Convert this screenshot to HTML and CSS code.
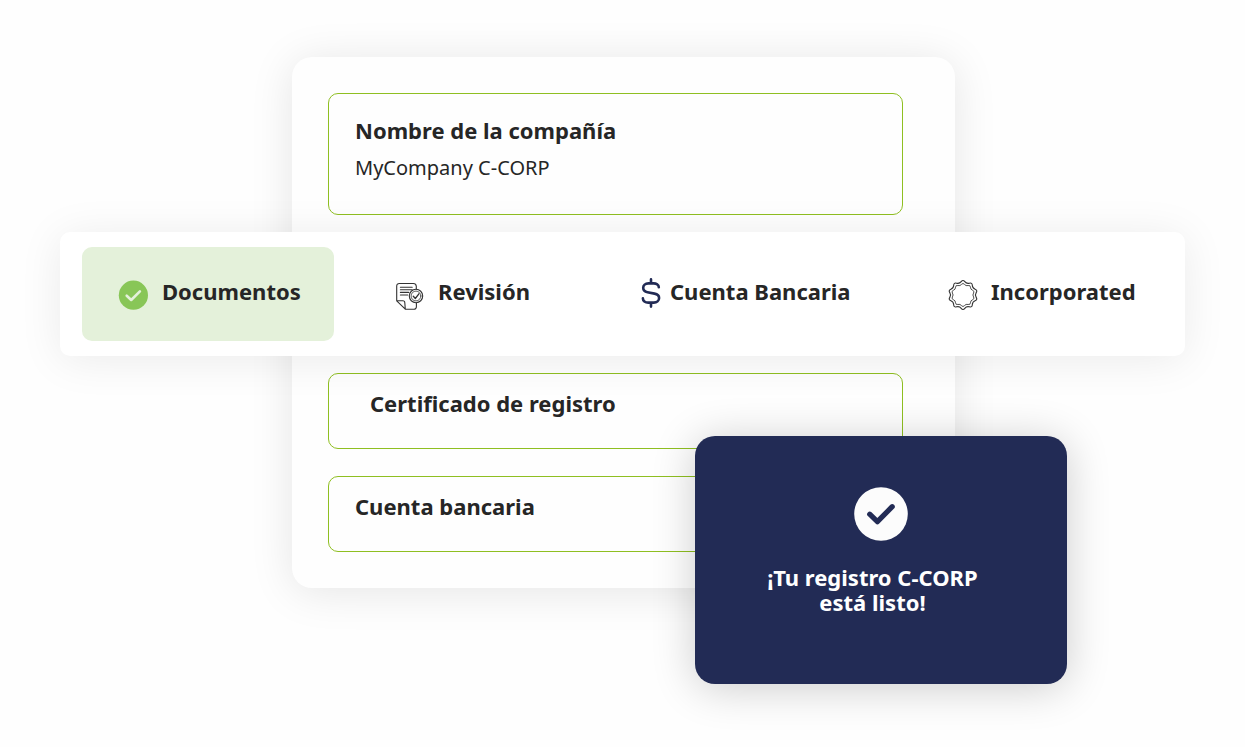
FILE: index.html
```html
<!DOCTYPE html>
<html lang="es">
<head>
<meta charset="utf-8">
<meta name="viewport" content="width=device-width, initial-scale=1">
<title>Registro C-CORP</title>
<link rel="stylesheet" href="styles.css">
</head>
<body>
<main class="stage">
  <section class="card">
    <article class="field field-company">
      <h2 class="title">Nombre de la compañía</h2>
      <p class="value">MyCompany C-CORP</p>
    </article>
    <article class="field field-certificate">
      <h2 class="title">Certificado de registro</h2>
    </article>
    <article class="field">
      <h2 class="title">Cuenta bancaria</h2>
    </article>
  </section>

  <nav class="steps" aria-label="Pasos">
    <button class="step step-active" type="button" aria-current="step">
      <svg class="icon" width="30" height="30" viewBox="0 0 30 30" aria-hidden="true">
        <circle cx="15.4" cy="15.2" r="14.6" fill="#88c657"/>
        <path d="M8.7 15.7l4.5 4.3 8.7-8.7" fill="none" stroke="#e4f1da" stroke-width="2.6" stroke-linecap="round" stroke-linejoin="round"/>
      </svg>
      <span class="label">Documentos</span>
    </button>
    <button class="step" type="button">
      <svg class="icon" width="28" height="30" viewBox="0 -2 28 30" fill="none" stroke="#333" stroke-width="1.1" stroke-linecap="round" stroke-linejoin="round" aria-hidden="true">
        <path d="M20.3 7V4.2A3 3 0 0 0 17.3 1.5H3.2A2.5 2.5 0 0 0 .7 4v14.8l8.6 8.4H18a2.4 2.4 0 0 0 2.4-2.4v-3.8M.7 18.8h6.1a2 2 0 0 1 2 2l.5 6.4"/>
        <path d="M4.4 5.2h11.8M4.4 7.8h11.8M4.4 10.4h8.4M4.4 13h7.4"/>
        <circle cx="20" cy="14" r="6.7"/>
        <circle cx="20" cy="14" r="4.9" stroke-width=".8"/>
        <path d="M17.3 14.2l2 2.3 3.6-4.7" stroke-width="1.3"/>
      </svg>
      <span class="label">Revisión</span>
    </button>
    <button class="step step-bank" type="button">
      <svg class="icon icon-dollar" width="20" height="30" viewBox="0 0 20 30" fill="none" stroke="#222b55" stroke-width="2.6" stroke-linecap="round" stroke-linejoin="round" aria-hidden="true">
        <path d="M10 1.4v4M10 24.6v4M17.8 9.3C17.8 6.7 15.2 5.4 12.6 5.4H7.4C4.2 5.4 2.2 7.3 2.2 9.8c0 2.6 1.8 4 4.3 4.5l7 1.3c2.8.5 4.6 1.9 4.6 4.4 0 2.8-2.2 4.6-5.4 4.6H7.3c-3.2 0-5.4-1.7-5.4-4.2"/>
      </svg>
      <span class="label">Cuenta Bancaria</span>
    </button>
    <button class="step step-last" type="button">
      <svg class="icon" width="30" height="30" viewBox="-15 -15 30 30" fill="none" stroke="#333" stroke-width="1.1" stroke-linejoin="round" aria-hidden="true">
        <path id="seal" d="M-1.8-13.3Q0-15.6 1.8-13.3Q3.6-11 6.4-11.8Q9.2-12.6 9.3-9.7Q9.4-6.8 12.1-5.8Q14.8-4.8 13.2-2.4Q11.6 0 13.2 2.4Q14.8 4.8 12.1 5.8Q9.4 6.8 9.3 9.7Q9.2 12.6 6.4 11.8Q3.6 11 1.8 13.3Q0 15.6-1.8 13.3Q-3.6 11-6.4 11.8Q-9.2 12.6-9.3 9.7Q-9.4 6.8-12.1 5.8Q-14.8 4.8-13.2 2.4Q-11.6 0-13.2-2.4Q-14.8-4.8-12.1-5.8Q-9.4-6.8-9.3-9.7Q-9.2-12.6-6.4-11.8Q-3.6-11-1.8-13.3Z"/>
        <use href="#seal" transform="scale(.8)"/>
      </svg>
      <span class="label">Incorporated</span>
    </button>
  </nav>

  <aside class="notice" role="status">
    <svg width="54" height="54" viewBox="0 0 54 54" aria-hidden="true">
      <circle cx="27" cy="27" r="26.8" fill="#fcfcfc"/>
      <path d="M15.7 27.2l7.7 7.5 14.8-15" fill="none" stroke="#222b55" stroke-width="5.2" stroke-linecap="round" stroke-linejoin="round"/>
    </svg>
    <p class="notice-text">¡Tu registro C-CORP<br>está listo!</p>
  </aside>
</main>
</body>
</html>
```
FILE: styles.css
```css
* {
  box-sizing: border-box;
}

body {
  margin: 0;
  background: #fefefe;
  color: #262626;
  font-family: "Noto Sans", "Open Sans", sans-serif;
}

.stage {
  position: relative;
  padding: 57px 60px 159px 62px;
}

.card {
  width: 100%;
  max-width: 663px;
  margin: 0 auto;
  padding: 36px 52px 36px 36px;
  border-radius: 20px;
  background: #fefefe;
  box-shadow: 0 4px 44px rgba(0, 0, 0, 0.1);
}

.field {
  min-height: 76px;
  margin-bottom: 27px;
  padding: 13px 26px;
  border: 1px solid #8fbf21;
  border-radius: 10px;
}

.field:last-child {
  margin-bottom: 0;
}

.field-company {
  min-height: 122px;
  margin-bottom: 158px;
  padding-top: 20px;
}

.field-certificate {
  padding-left: 41px;
}

.title,
.value {
  margin: 0;
  line-height: 32px;
}

.title {
  font-size: 22px;
  font-weight: 700;
}

.value {
  margin-top: 6px;
  font-size: 20px;
}

.steps {
  position: absolute;
  top: 232px;
  left: 60px;
  right: 60px;
  display: grid;
  grid-template-columns: 252fr 219fr 281fr 251fr;
  gap: 26px;
  padding: 15px 22px;
  border-radius: 10px;
  background: #fff;
  box-shadow: 0 4px 44px rgba(0, 0, 0, 0.08);
}

.step {
  display: flex;
  align-items: center;
  gap: 14px;
  height: 94px;
  padding: 2px 0 0 36px;
  border: 0;
  border-radius: 10px;
  background: transparent;
  color: inherit;
  font: 700 22px/32px "Noto Sans", "Open Sans", sans-serif;
  white-space: nowrap;
}

.step-active {
  background: #e4f1da;
}

.step-bank {
  gap: 9px;
}

.step-last {
  gap: 13px;
}

.icon {
  flex: none;
}

.icon-dollar {
  margin-bottom: 4px;
}

.label {
  padding-bottom: 8px;
}

.notice {
  position: absolute;
  top: 436px;
  left: calc(50% + 72px);
  display: flex;
  flex-direction: column;
  align-items: center;
  gap: 24px;
  width: 372px;
  min-height: 248px;
  padding: 51px 16px;
  border-radius: 20px;
  background: #222b55;
  box-shadow: 0 4px 44px rgba(0, 0, 0, 0.2);
}

.notice-text {
  margin: 0;
  padding-right: 16px;
  color: #fff;
  font-size: 22px;
  font-weight: 700;
  line-height: 25px;
  text-align: center;
}
```
